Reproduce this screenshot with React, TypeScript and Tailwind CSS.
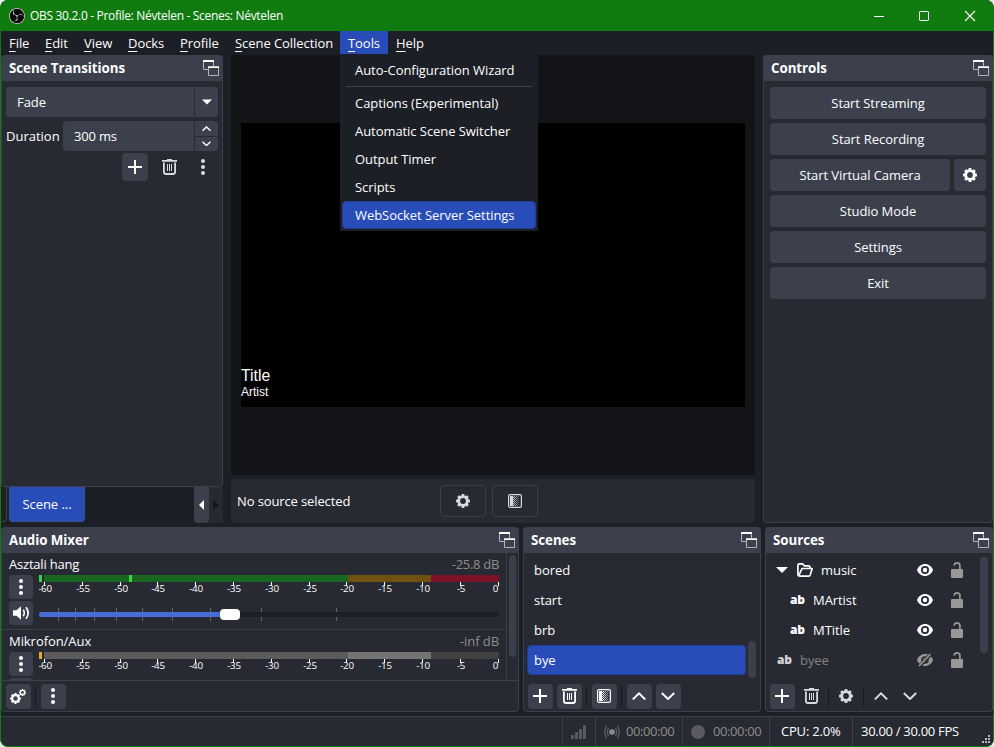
import React from 'react';
import { SiObsstudio } from 'react-icons/si';

type BoxProps = { className?: string; children?: React.ReactNode };

const Gear = ({ size = 14, color = '#fefefe' }: { size?: number; color?: string }) => (
  <svg width={size} height={size} viewBox="0 0 14 14" className="shrink-0">
    <circle cx="7" cy="7" r="4.3" fill="none" stroke={color} strokeWidth="2.8" />
    {[0, 45, 90, 135, 180, 225, 270, 315].map((a) => (
      <rect key={a} x="5.6" y="0.1" width="2.8" height="2.6" rx="0.5" fill={color} transform={`rotate(${a} 7 7)`} />
    ))}
  </svg>
);

const Plus = () => (
  <svg width="14" height="14" viewBox="0 0 14 14">
    <path d="M7 0v14M0 7h14" stroke="#fefefe" strokeWidth="2" />
  </svg>
);

const Trash = ({ color = '#fefefe' }: { color?: string }) => (
  <svg width="15" height="16" viewBox="0 0 15 16" fill="none" stroke={color}>
    <path d="M0 1.9h15" strokeWidth="1.8" />
    <path d="M5 0.6h5" strokeWidth="1.2" />
    <path d="M1.9 3.5v9.6q0 1.9 1.9 1.9h7.4q1.9 0 1.9-1.9V3.5" strokeWidth="1.8" />
    <path d="M5.5 5v7M7.5 5v7M9.5 5v7" strokeWidth="1" />
  </svg>
);

const Dots = ({ color = '#fefefe' }: { color?: string }) => (
  <svg width="4" height="16" viewBox="0 0 4 16" fill={color}>
    <circle cx="2" cy="2" r="2" />
    <circle cx="2" cy="8" r="2" />
    <circle cx="2" cy="14" r="2" />
  </svg>
);

const Chevron = ({ up = false, w = 14, color = '#fefefe', sw = 2 }: { up?: boolean; w?: number; color?: string; sw?: number }) => (
  <svg width={w} height={w * 0.6} viewBox="0 0 14 8.4" fill="none" stroke={color} strokeWidth={sw}>
    <path d={up ? 'M0.8 7.4L7 1.4L13.2 7.4' : 'M0.8 1L7 7L13.2 1'} />
  </svg>
);

const FloatIcon = () => (
  <svg width="16" height="16" viewBox="0 0 16 16" fill="none" className="shrink-0">
    <path d="M0.5 1V9.5H5M10.5 1V6" stroke="#b4b6bc" />
    <path d="M0 1H11" stroke="#fefefe" strokeWidth="2" />
    <path d="M5.5 7V15.5H15.5V7" stroke="#b4b6bc" />
    <path d="M5 7.2H16" stroke="#fefefe" strokeWidth="1.8" />
  </svg>
);

const Filter = ({ color = '#fefefe' }: { color?: string }) => (
  <svg width="14" height="14" viewBox="0 0 14 14">
    <rect x="0.6" y="0.6" width="12.8" height="12.8" rx="1.6" fill="none" stroke={color} strokeWidth="1.2" />
    <rect x="2" y="2" width="3" height="10" fill={color} />
    {[0, 1, 2, 3, 4, 5, 6, 7, 8, 9].map((i) => (
      <g key={i} fill={color}>
        <rect x={i % 2 ? 5 : 6} y={2 + i} width="1" height="1" opacity="0.9" />
        <rect x={i % 2 ? 7 : 8} y={2 + i} width="1" height="1" opacity="0.6" />
        <rect x={i % 2 ? 9 : 10} y={2 + i} width="1" height="1" opacity="0.35" />
      </g>
    ))}
  </svg>
);

const Eye = () => (
  <svg width="16" height="12" viewBox="0 0 16 12">
    <path d="M8 0C4.3 0 1.3 2.5 0 6c1.300 3.500 4.300 6 8 6s6.700-2.500 8-6C14.700 2.500 11.700 0 8 0z" fill="#fefefe" />
    <circle cx="8" cy="6" r="4" fill="#272a33" />
    <circle cx="8" cy="6" r="2.200" fill="#fefefe" />
  </svg>
);

const EyeOff = () => (
  <svg width="16" height="14" viewBox="0 0 16 14">
    <path d="M8 1C4.300 1 1.300 3.500 0 7c1.300 3.500 4.300 6 8 6s6.700-2.500 8-6C14.700 3.500 11.700 1 8 1z" fill="#999894" />
    <circle cx="8" cy="7" r="3.800" fill="#272a33" />
    <circle cx="8" cy="7" r="2.200" fill="#999894" />
    <path d="M2 13.500L14.500 0.500" stroke="#272a33" strokeWidth="3.600" />
    <path d="M2 13L13.500 1" stroke="#999894" strokeWidth="1.700" />
  </svg>
);

const Lock = () => (
  <svg width="12" height="16" viewBox="0 0 12 16">
    <rect x="0" y="7" width="12" height="9" rx="1" fill="#999894" />
    <path d="M3.100 3.600C3.300 1.800 4.400 0.900 6 0.900c1.800 0 2.900 1.100 2.900 2.900V7.500" fill="none" stroke="#999894" strokeWidth="1.700" />
  </svg>
);

const Folder = () => (
  <svg width="16" height="14" viewBox="0 0 16 14" fill="none" stroke="#fefefe" strokeWidth="1.700" strokeLinejoin="round">
    <path d="M2.400 13.100Q0.900 13.100 0.900 11.600V2.400Q0.900 0.900 2.400 0.900H5.500L7.500 2.900H11.500Q13 2.900 13 4.400V5.400" />
    <path d="M1.800 12.600L5 5.500H15.200L13.200 12Q12.800 13.100 11.800 13.100H2.200" />
  </svg>
);

const Speaker = () => (
  <svg width="17" height="14" viewBox="0 0 17 14" fill="none" stroke="#fefefe">
    <path d="M0 4.200H3.500L8 0.300V13.700L3.500 9.800H0Z" fill="#fefefe" stroke="none" />
    <path d="M10.200 3.800Q12.400 7 10.200 10.200" strokeWidth="1.600" />
    <path d="M13 1.300Q17.300 7 13 12.700" strokeWidth="1.700" />
  </svg>
);

const ObsLogo = () => (
  <span className="flex h-4 w-4 shrink-0 items-center justify-center rounded-full bg-[#080808]">
    <SiObsstudio size={16} color="#e2e2e2" />
  </span>
);

const Dock = ({ title, className = '', children }: BoxProps & { title: string }) => (
  <section className={`flex flex-col overflow-hidden rounded bg-[#272a33] ${className}`}>
    <header className="flex h-[26px] shrink-0 items-center justify-between bg-[#3c404d] pr-1 pl-2 text-[13.300px] font-bold tracking-[-0.040px]">
      <span>{title}</span>
      <FloatIcon />
    </header>
    <div className="flex min-h-0 flex-1 flex-col rounded-b border border-t-0 border-[#3c404d]">{children}</div>
  </section>
);

const ToolBtn = ({ flat = false, className = 'w-[25px] pr-px', children }: BoxProps & { flat?: boolean }) => (
  <button className={`flex h-[25px] shrink-0 items-center justify-center rounded ${flat ? '' : 'bg-[#3c404d]'} ${className}`}>{children}</button>
);

const Divider = () => <i className="mr-[5px] ml-1 h-[19px] w-px shrink-0 bg-[#16171d]" />;

const MenuEntry = ({ label, className }: { label: string; className: string }) => (
  <span className={`flex h-[23px] items-center pl-2 whitespace-nowrap ${className}`}>
    <span>
      <span className="underline decoration-1 underline-offset-[3px]">{label[0]}</span>
      {label.slice(1)}
    </span>
  </span>
);

const LABELS = [-60, -55, -50, -45, -40, -35, -30, -25, -20, -15, -10, -5, 0];

const Scale = () => (
  <svg width="464" height="14" viewBox="0 0 464 14" className="block">
    {LABELS.map((v, i) => {
      const x = Math.round(5 + i * 37.8);
      return (
        <g key={v}>
          <rect x={v === 0 ? 459 : x} y="0" width="1" height="4" fill="#fefefe" />
          <text x={v === 0 ? 456.500 : x + 1} y="10" textAnchor="middle" fontSize="9.800" letterSpacing="-0.300" fill="#fefefe">{v}</text>
        </g>
      );
    })}
  </svg>
);

const Meter = ({ live = false }: { live?: boolean }) => (
  <div className="flex h-[7px] w-[460px]">
    <i className={`mr-0.5 w-[3px] ${live ? 'bg-[#3ad44a]' : 'bg-[#e5ae26]'}`} />
    <i className={`w-[85px] ${live ? 'bg-[#1a651f]' : 'bg-[#5b5b5b]'}`} />
    <i className={`w-[3px] ${live ? 'bg-[#3ad44a]' : 'bg-[#5b5b5b]'}`} />
    <i className={`w-[216px] ${live ? 'bg-[#1a651f]' : 'bg-[#5b5b5b]'}`} />
    <i className={`w-[83px] ${live ? 'bg-[#70510f]' : 'bg-[#747474]'}`} />
    <i className={`w-[68px] ${live ? 'bg-[#7d1226]' : 'bg-[#414141]'}`} />
  </div>
);

const VolumeSlider = () => (
  <svg width="460" height="14" viewBox="0 0 460 14" className="mt-3 block">
    {[19, 36, 55, 77, 103, 133, 171, 222, 297].map((x) => (
      <rect key={x} x={x} y="0" width="1" height="13" fill="#5b6273" />
    ))}
    <rect x="0" y="4" width="460" height="5" rx="2" fill="#1d1f26" />
    <rect x="0" y="4" width="190" height="5" rx="2" fill="#476bd7" />
    <rect x="181" y="1" width="20" height="11" rx="4" fill="#fefefe" />
  </svg>
);

const ControlButton = ({ className = '', children }: BoxProps) => (
  <button className={`flex h-8 items-center justify-center rounded bg-[#3c404d] ${className}`}>{children}</button>
);

const SourceRow = ({ name, kind }: { name: string; kind: 'group' | 'child' | 'hidden' }) => (
  <div className="flex h-[30px] items-center pr-[29px] pl-2.5">
    {kind === 'group' && (
      <>
        <svg width="12" height="6" viewBox="0 0 12 6" className="mr-[9px]"><path d="M0 0H12L6 6Z" fill="#fefefe" /></svg>
        <Folder />
      </>
    )}
    {kind !== 'group' && (
      <span className={`w-3.5 text-[12px] leading-none font-extrabold tracking-[-0.300px] ${kind === 'child' ? 'ml-3.5' : 'ml-px text-[#d2d3d8]'}`}>ab</span>
    )}
    <span className={kind === 'group' ? 'ml-2' : kind === 'child' ? 'ml-[9px]' : 'ml-[9px] text-[#82817e]'}>{name}</span>
    <span className="ml-auto flex w-4 justify-center">{kind === 'hidden' ? <EyeOff /> : <Eye />}</span>
    <span className="ml-[18px]"><Lock /></span>
  </div>
);

const StatusCell = ({ className = '', children }: BoxProps) => (
  <div className={`flex items-center border-l border-[#3c404d] ${className}`}>{children}</div>
);

export default function App() {
  return (
    <div className="h-[747px] w-[994px] overflow-hidden bg-[#e8ece8] font-['Open_Sans','Noto_Sans',sans-serif] text-[13px] leading-[18px] tracking-[-0.060px] text-[#fefefe]">
      <div className="flex h-full flex-col overflow-hidden rounded-lg border-x border-b border-[#107c10] bg-[#1d1f26]">
        <div className="flex h-[31px] shrink-0 items-center bg-[#107c10] pl-2">
          <ObsLogo />
          <span className="ml-[5px] text-[12px] tracking-[-0.310px]">OBS 30.2.0 - Profile: Névtelen - Scenes: Névtelen</span>
          <svg width="104" height="12" viewBox="0 0 104 12" fill="none" stroke="#fefefe" className="mr-[16px] ml-auto">
            <path d="M1 6.500H11" />
            <rect x="46.500" y="1.500" width="9" height="9" rx="0.800" />
            <path d="M92 1L102 11M102 1L92 11" strokeWidth="1.100" />
          </svg>
        </div>

        <nav className="relative flex h-6 shrink-0">
          <MenuEntry label="File" className="w-9" />
          <MenuEntry label="Edit" className="w-[39px]" />
          <MenuEntry label="View" className="w-11" />
          <MenuEntry label="Docks" className="w-[52px]" />
          <MenuEntry label="Profile" className="w-[55px]" />
          <MenuEntry label="Scene Collection" className="w-[113px]" />
          <MenuEntry label="Tools" className="w-12 bg-[#284cb8]" />
          <MenuEntry label="Help" className="w-12" />
          <div className="absolute top-[23px] left-[339px] z-10 h-[177px] w-[198px] bg-[#1d1f26] px-0.5 pt-0.5">
            <div className="flex h-7 items-center px-[13px]">Auto-Configuration Wizard</div>
            <div className="mx-1 mt-0.5 mb-0.5 h-px bg-[#3c404d]" />
            <div className="flex h-7 items-center px-[13px]">Captions (Experimental)</div>
            <div className="flex h-7 items-center px-[13px]">Automatic Scene Switcher</div>
            <div className="flex h-7 items-center px-[13px]">Output Timer</div>
            <div className="flex h-7 items-center px-[13px]">Scripts</div>
            <div className="flex h-7 items-center rounded border border-[#213f96] bg-[#284cb8] px-3">WebSocket Server Settings</div>
          </div>
        </nav>

        <main className="flex h-[468px] shrink-0 gap-2">
          <div className="flex w-[222px] shrink-0 flex-col">
            <Dock title="Scene Transitions" className="h-[432px]">
              <div className="mx-1 mt-1.5 flex h-[30px] items-center rounded bg-[#3c404d]">
                <span className="flex-1 pl-[11px]">Fade</span>
                <span className="flex h-7 w-6 items-center justify-center border-l border-[#272a33]">
                  <svg width="10" height="6" viewBox="0 0 10 6"><path d="M0 0.500H10L5 5.500Z" fill="#fefefe" /></svg>
                </span>
              </div>
              <div className="mx-1 mt-1 flex h-[30px] items-center justify-between">
                <span className="tracking-normal">Duration</span>
                <div className="flex h-full w-[155px] items-center rounded bg-[#3c404d]">
                  <span className="flex-1 pl-[11px] tracking-[-0.200px]">300 ms</span>
                  <span className="flex h-7 w-6 flex-col border-l border-[#272a33]">
                    <i className="flex flex-1 items-center justify-center border-b border-[#272a33]"><Chevron up w={9} sw={2.200} /></i>
                    <i className="flex flex-1 items-center justify-center"><Chevron w={9} sw={2.200} /></i>
                  </span>
                </div>
              </div>
              <div className="mt-0.5 flex h-7 items-center justify-end pr-[17px]">
                <span className="flex h-7 w-[26px] items-center justify-center rounded bg-[#3c404d]"><Plus /></span>
                <span className="ml-3.5"><Trash color="#d8dae0" /></span>
                <span className="ml-6"><Dots color="#d8dae0" /></span>
              </div>
            </Dock>
            <div className="flex h-9">
              <i className="h-[35px] w-[6px] rounded-br border-r border-b border-[#3c404d]" />
              <span className="ml-0.5 flex h-[35px] w-[76px] items-center justify-center rounded-b border border-t-0 border-[#3c5191] bg-[#284cb8]">Scene ...</span>
              <span className="ml-auto flex w-[15px] items-center justify-center rounded-b bg-[#3c404d]">
                <svg width="5" height="10" viewBox="0 0 5 10"><path d="M5 0V10L0 5Z" fill="#fefefe" /></svg>
              </span>
              <span className="flex w-3.5 items-center justify-center bg-[#272a33]">
                <svg width="6" height="10" viewBox="0 0 6 10"><path d="M0 0V10L6 5Z" fill="#16171d" /></svg>
              </span>
            </div>
          </div>

          <div className="flex w-[524px] shrink-0 flex-col gap-1">
            <div className="flex h-[420px] flex-col bg-[#131418] px-2.5 pt-[68px]">
              <div className="h-[284px] bg-black pt-[243px] font-['Liberation_Sans',Arial,sans-serif] tracking-normal text-white">
                <div className="text-[15.800px] leading-[20px]">Title</div>
                <div className="text-[12px] leading-[12px]">Artist</div>
              </div>
            </div>
            <div className="flex h-11 items-center rounded bg-[#272a33] pl-1.5">
              <span className="w-[203px] tracking-[-0.120px]">No source selected</span>
              <span className="flex h-8 w-[46px] items-center justify-center rounded border border-[#3c404d]"><Gear color="#d8dae0" /></span>
              <span className="ml-1.5 flex h-8 w-[46px] items-center justify-center rounded border border-[#3c404d]"><Filter color="#d8dae0" /></span>
            </div>
          </div>

          <Dock title="Controls" className="w-[230px] shrink-0">
            <div className="flex flex-col gap-1 px-1.5 pt-1.5">
              <ControlButton>Start Streaming</ControlButton>
              <ControlButton>Start Recording</ControlButton>
              <div className="flex gap-1">
                <ControlButton className="flex-1">Start Virtual Camera</ControlButton>
                <ControlButton className="w-8"><Gear /></ControlButton>
              </div>
              <ControlButton>Studio Mode</ControlButton>
              <ControlButton>Settings</ControlButton>
              <ControlButton>Exit</ControlButton>
            </div>
          </Dock>
        </main>

        <div className="mt-1 flex h-[185px] shrink-0 gap-1">
          <Dock title="Audio Mixer" className="w-[518px] shrink-0">
            <div className="flex h-[128px] shrink-0 border-b border-[#3c404d]">
              <div className="flex w-[505px] flex-col overflow-hidden border-r border-[#3c404d]">
                <div className="h-[77px] shrink-0 border-b border-[#3c404d] pr-[7px] pl-[7px]">
                  <div className="flex h-[22px] items-center justify-between">
                    <span className="tracking-[-0.200px]">Asztali hang</span>
                    <span className="tracking-[-0.300px] text-[#8e8d8a]">-25.8 dB</span>
                  </div>
                  <div className="flex gap-1.5">
                    <div className="flex flex-col gap-0.5">
                      <ToolBtn className="h-6! w-6"><Dots /></ToolBtn>
                      <ToolBtn className="h-6! w-6"><Speaker /></ToolBtn>
                    </div>
                    <div>
                      <Meter live />
                      <Scale />
                      <VolumeSlider />
                    </div>
                  </div>
                </div>
                <div className="shrink-0 pr-[7px] pl-[7px]">
                  <div className="flex h-[22px] items-center justify-between">
                    <span>Mikrofon/Aux</span>
                    <span className="text-[#8e8d8a]">-inf dB</span>
                  </div>
                  <div className="flex gap-1.5">
                    <div className="flex flex-col gap-0.5">
                      <ToolBtn className="h-6! w-6"><Dots /></ToolBtn>
                      <ToolBtn className="h-6! w-6" />
                    </div>
                    <div>
                      <Meter />
                      <Scale />
                    </div>
                  </div>
                </div>
              </div>
              <i className="mt-[2px] ml-0.5 h-[102px] w-[7px] rounded-sm bg-[#3c404d]" />
            </div>
            <div className="flex h-[30px] items-center pl-1">
              <ToolBtn className="w-[25px] pr-0.5">
                <span className="mt-[5px] -mr-0.5"><Gear size={11} /></span>
                <span className="mb-2"><Gear size={7} /></span>
              </ToolBtn>
              <Divider />
              <ToolBtn><Dots /></ToolBtn>
            </div>
          </Dock>

          <Dock title="Scenes" className="w-[238px] shrink-0">
            <div className="flex h-[128px] shrink-0 px-[3px] pt-0.5">
              <div className="w-[219px]">
                {['bored', 'start', 'brb'].map((s) => (
                  <div key={s} className="flex h-[30px] items-center pl-[7px]">{s}</div>
                ))}
                <div className="flex h-[30px] items-center rounded border border-[#213f96] bg-[#284cb8] pl-1.5">bye</div>
              </div>
              <i className="mt-[86px] ml-0.5 h-[37px] w-2 rounded-sm bg-[#3c404d]" />
            </div>
            <div className="flex h-[30px] items-center pl-1">
              <ToolBtn><Plus /></ToolBtn>
              <ToolBtn className="ml-1 w-[25px]"><Trash /></ToolBtn>
              <Divider />
              <ToolBtn><Filter /></ToolBtn>
              <Divider />
              <ToolBtn><Chevron up /></ToolBtn>
              <ToolBtn className="ml-1 w-[25px] pr-px"><Chevron /></ToolBtn>
            </div>
          </Dock>

          <Dock title="Sources" className="w-[228px] shrink-0">
            <div className="flex h-[128px] shrink-0 pt-0.5">
              <div className="w-[226px]">
                <SourceRow name="music" kind="group" />
                <SourceRow name="MArtist" kind="child" />
                <SourceRow name="MTitle" kind="child" />
                <SourceRow name="byee" kind="hidden" />
              </div>
              <i className="mt-0.5 -ml-[12px] h-24 w-2 shrink-0 rounded-sm bg-[#3c404d]" />
            </div>
            <div className="flex h-[30px] items-center pl-1">
              <ToolBtn><Plus /></ToolBtn>
              <ToolBtn flat className="ml-1 w-[25px]"><Trash color="#d8dae0" /></ToolBtn>
              <Divider />
              <ToolBtn flat><Gear color="#d8dae0" /></ToolBtn>
              <Divider />
              <ToolBtn flat><Chevron up color="#d8dae0" /></ToolBtn>
              <ToolBtn flat className="ml-1 w-[25px] pr-px"><Chevron color="#d8dae0" /></ToolBtn>
            </div>
          </Dock>
        </div>

        <footer className="mt-1 flex h-[30px] shrink-0 border-t border-[#3c404d] bg-[#272a33] pl-[561px]">
          <StatusCell className="w-[33px] pl-2">
            <svg width="16" height="14" viewBox="0 0 16 14" fill="#5a5b62">
              <rect x="0" y="10" width="3" height="4" rx="0.500" />
              <rect x="4" y="7" width="3" height="7" rx="0.500" />
              <rect x="8" y="4" width="3" height="10" rx="0.500" />
              <rect x="12" y="0" width="3" height="14" rx="0.500" />
            </svg>
          </StatusCell>
          <StatusCell className="w-[87px] pl-2 text-[#8e8d8a]">
            <svg width="16" height="14" viewBox="0 0 16 14" fill="none" stroke="#5a5b62" strokeWidth="1.300">
              <circle cx="8" cy="7" r="2.800" fill="#8a8b8f" stroke="none" />
              <path d="M4.600 3.200Q2.200 7 4.600 10.800M11.400 3.200Q13.800 7 11.400 10.800M2.600 0.800Q-1 7 2.600 13.200M13.400 0.800Q17 7 13.400 13.200" />
            </svg>
            <span className="ml-1.5 pb-px tracking-[-0.400px]">00:00:00</span>
          </StatusCell>
          <StatusCell className="w-[87px] pl-2 text-[#8e8d8a]">
            <i className="h-3.5 w-3.5 rounded-full bg-[#5a5b62]" />
            <span className="ml-2 pb-px tracking-[-0.400px]">00:00:00</span>
          </StatusCell>
          <StatusCell className="w-[83px] pb-px pl-[11px] tracking-[-0.200px]">CPU: 2.0%</StatusCell>
          <StatusCell className="flex-1 pb-px pl-2 tracking-[-0.300px]">30.00 / 30.00 FPS</StatusCell>
          <svg width="9" height="9" viewBox="0 0 9 9" fill="#b8b8b4" className="mr-0.5 mb-0.5 self-end">
            {[[6, 0], [3, 3], [6, 3], [0, 6], [3, 6], [6, 6]].map(([x, y]) => (
              <rect key={`${x}-${y}`} x={x} y={y} width="2" height="2" />
            ))}
          </svg>
        </footer>
      </div>
    </div>
  );
}
